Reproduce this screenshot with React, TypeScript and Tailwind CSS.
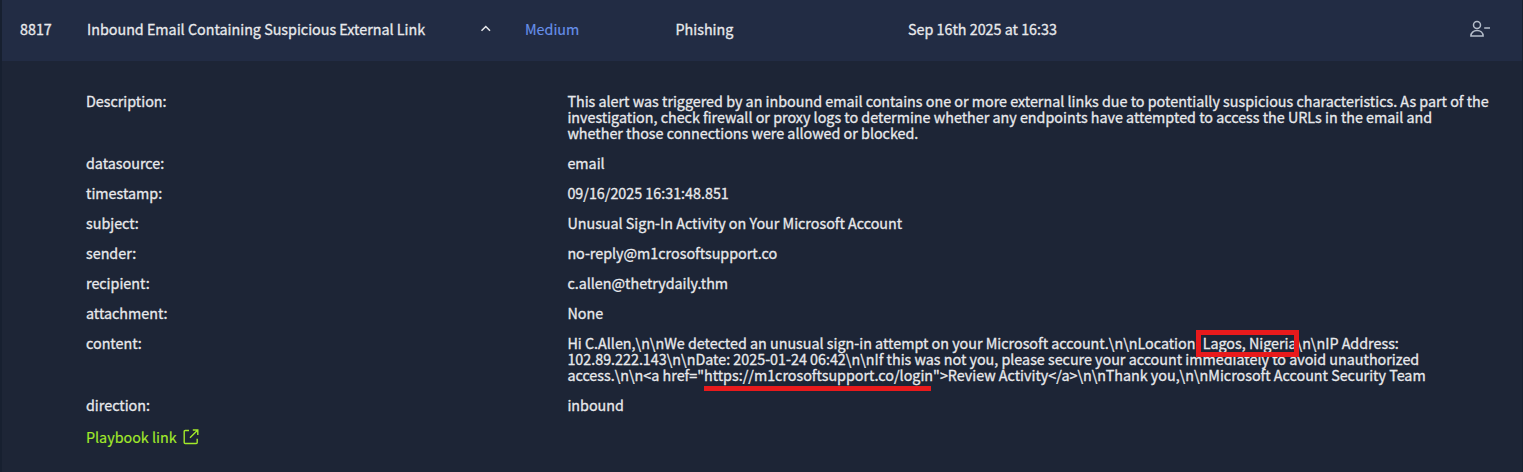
import React from "react";

type Field = { label: string; lines: React.ReactNode[] };

const Boxed = ({ children }: { children: React.ReactNode }) => (
  <span className="relative">
    {children}
    <span className="absolute -left-[7px] -top-[2px] h-[27px] w-[103px] border-[5px] border-[#e81a1c]" />
  </span>
);

const Underlined = ({ children }: { children: React.ReactNode }) => (
  <span className="relative">
    {children}
    <span className="absolute left-0 top-[22px] h-[5px] w-[227px] bg-[#e81a1c]" />
  </span>
);

const fields: Field[] = [
  {
    label: "Description:",
    lines: [
      "This alert was triggered by an inbound email contains one or more external links due to potentially suspicious characteristics. As part of the",
      "investigation, check firewall or proxy logs to determine whether any endpoints have attempted to access the URLs in the email and",
      "whether those connections were allowed or blocked.",
    ],
  },
  { label: "datasource:", lines: ["email"] },
  { label: "timestamp:", lines: ["09/16/2025 16:31:48.851"] },
  { label: "subject:", lines: ["Unusual Sign-In Activity on Your Microsoft Account"] },
  { label: "sender:", lines: ["no-reply@m1crosoftsupport.co"] },
  { label: "recipient:", lines: ["c.allen@thetrydaily.thm"] },
  { label: "attachment:", lines: ["None"] },
  {
    label: "content:",
    lines: [
      <>
        {"Hi C.Allen,\\n\\nWe detected an unusual sign-in attempt on your Microsoft account.\\n\\nLocation: "}
        <Boxed>Lagos, Nigeria</Boxed>
        {"\\n\\nIP Address:"}
      </>,
      "102.89.222.143\\n\\nDate: 2025-01-24 06:42\\n\\nIf this was not you, please secure your account immediately to avoid unauthorized",
      <>
        {'access.\\n\\n<a href="'}
        <Underlined>https://m1crosoftsupport.co/login</Underlined>
        {'">Review Activity</a>\\n\\nThank you,\\n\\nMicrosoft Account Security Team'}
      </>,
    ],
  },
  { label: "direction:", lines: ["inbound"] },
];

export default function App() {
  return (
    <main className="h-[472px] w-[1523px] overflow-hidden whitespace-nowrap border-l-2 border-r border-[#172030] bg-[#1d2536] font-['Noto_Sans_CJK_SC','Noto_Sans',sans-serif] text-[14.325px] font-normal leading-4 text-[#e8e9ec] [-webkit-text-stroke:0.3px_currentColor]">
      <header className="flex h-[61px] items-center bg-[#222c44] pb-1 pl-[18px] pr-[31px]">
        <span className="w-[67px]">8817</span>
        <span className="w-[393px]">Inbound Email Containing Suspicious External Link</span>
        <svg className="mr-[34px] h-[10px] w-[11px]" viewBox="0 0 11 10" fill="none" stroke="currentColor" strokeWidth="1.5">
          <path d="M1.5 6.8 5.8 2.5 10 6.8" />
        </svg>
        <span className="w-[150.5px] text-[#6790ea] [-webkit-text-stroke-width:0.15px]">Medium</span>
        <span className="w-[232.5px]">Phishing</span>
        <span>Sep 16th 2025 at 16:33</span>
        <svg className="ml-auto mt-px h-[18px] w-[21px] text-[#b5bdca]" viewBox="0 0 21 18" fill="none" stroke="currentColor" strokeWidth="1.5">
          <circle cx="7" cy="5" r="3.5" />
          <path d="M.9 16.1c0-3.3 2.5-5.5 6.1-5.5s6.1 2.2 6.1 5.5z" />
          <path d="M14.2 8h5.8" />
        </svg>
      </header>
      <section className="flex flex-col gap-[14px] pl-[84px] pt-[32px]">
        {fields.map((field) => (
          <div key={field.label} className="flex">
            <div className="w-[481.4px] shrink-0">{field.label}</div>
            <div>
              {field.lines.map((line, i) => (
                <div key={i}>{line}</div>
              ))}
            </div>
          </div>
        ))}
        <a className="flex items-center gap-[6px] pt-0.5 text-[#a3ea2a] [-webkit-text-stroke-width:0.15px]">
          Playbook link
          <svg className="h-4 w-4" viewBox="0 0 16 16" fill="none" stroke="currentColor" strokeWidth="1.4">
            <path d="M6 1.5H2.2Q1.2 1.5 1.2 2.5v11q0 1 1 1h11q1 0 1-1V9.8M9.8 1h5v5M14.5 1.3 7 8.8" />
          </svg>
        </a>
      </section>
    </main>
  );
}
